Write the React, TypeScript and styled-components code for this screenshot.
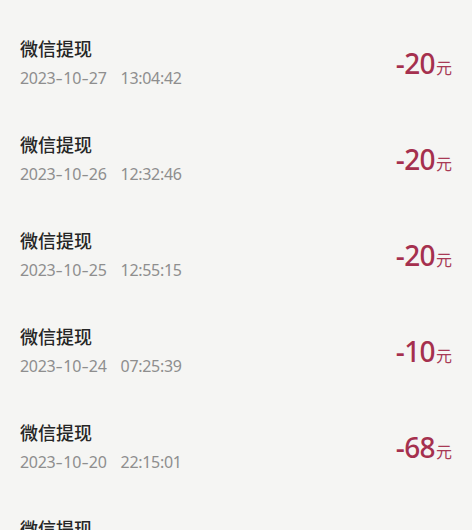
import React from "react";
import styled, { createGlobalStyle } from "styled-components";

const Global = createGlobalStyle`
  html, body {
    margin: 0;
    padding: 0;
    background: #f5f5f3;
  }
  body {
    font-family: "Noto Sans", "Noto Sans CJK SC", sans-serif;
    -webkit-font-smoothing: antialiased;
  }
`;

const Page = styled.div`
  width: 472px;
  height: 530px;
  overflow: hidden;
  background: #f5f5f3;
  padding-top: 15px;
  box-sizing: border-box;
`;

const List = styled.ul`
  list-style: none;
  margin: 0;
  padding: 0;
`;

const Row = styled.li`
  height: 96px;
  box-sizing: border-box;
  padding: 20px 20px 22px 20px;
  display: flex;
  align-items: center;
  justify-content: space-between;
`;

const Info = styled.div`
  display: flex;
  flex-direction: column;
  gap: 6px;
`;

const Title = styled.div`
  font-family: "Noto Sans CJK SC", "Noto Sans", sans-serif;
  font-size: 18px;
  line-height: 26px;
  font-weight: 500;
  color: #262626;
`;

const Meta = styled.div`
  display: flex;
  gap: 14px;
  font-family: "Noto Sans", "Noto Sans CJK SC", sans-serif;
  font-size: 16px;
  line-height: 22px;
  letter-spacing: -0.3px;
  color: #8e8e8e;
`;

const Sep = styled.span`
  display: inline-block;
  padding: 0 1.5px;
  transform: scaleX(1.4);
`;

const Amount = styled.div`
  display: flex;
  align-items: baseline;
  margin-top: 2px;
  color: #a5304e;
`;

const Value = styled.span`
  font-family: "Noto Sans", sans-serif;
  font-size: 28px;
  font-weight: 500;
  line-height: 32px;
  letter-spacing: -0.6px;
`;

const Unit = styled.span`
  font-family: "Noto Sans CJK SC", sans-serif;
  font-size: 16px;
  margin-left: 1px;
  color: #a83a55;
`;

const items = [
  { date: "2023-10-27", time: "13:04:42", amount: "-20" },
  { date: "2023-10-26", time: "12:32:46", amount: "-20" },
  { date: "2023-10-25", time: "12:55:15", amount: "-20" },
  { date: "2023-10-24", time: "07:25:39", amount: "-10" },
  { date: "2023-10-20", time: "22:15:01", amount: "-68" },
  { date: "2023-10-19", time: "18:20:11", amount: "-20" },
];

function DateText({ value }: { value: string }) {
  const parts = value.split("-");
  return (
    <span>
      {parts.map((p, i) => (
        <React.Fragment key={i}>
          {i > 0 && <Sep>-</Sep>}
          {p}
        </React.Fragment>
      ))}
    </span>
  );
}

export default function App() {
  return (
    <Page>
      <Global />
      <List>
        {items.map((it, i) => (
          <Row key={i}>
            <Info>
              <Title>微信提现</Title>
              <Meta>
                <DateText value={it.date} />
                <span>{it.time}</span>
              </Meta>
            </Info>
            <Amount>
              <Value>{it.amount}</Value>
              <Unit>元</Unit>
            </Amount>
          </Row>
        ))}
      </List>
    </Page>
  );
}
